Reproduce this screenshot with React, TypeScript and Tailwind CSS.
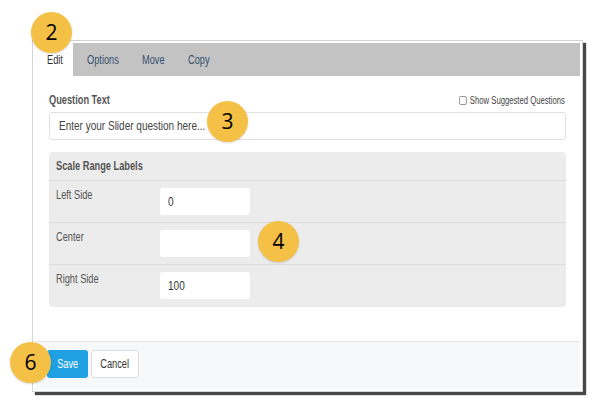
import React from "react";

const N = "inline-block whitespace-nowrap origin-left scale-x-[0.77]";
const NC = "inline-block whitespace-nowrap origin-center scale-x-[0.77]";

function Badge({ n, className }: { n: string; className: string }) {
  return (
    <div
      className={`absolute w-[41px] h-[41px] rounded-full bg-[#f5c046] flex items-center justify-center text-[21px] text-black font-['Open_Sans',sans-serif] shadow-[0_1px_2px_rgba(0,0,0,0.15)] ${className}`}
    >
      {n}
    </div>
  );
}

function Row({ label, value, last }: { label: string; value: string; last?: boolean }) {
  return (
    <div className={`flex h-[42px] pl-[7px] ${last ? "" : "border-b border-[#dcdcdc]"}`}>
      <div className="w-[104px] pt-[6px] text-[12px] text-[#555] leading-[16px]">
        <span className={N}>{label}</span>
      </div>
      <div className="pt-[7px]">
        <div className="w-[90px] h-[27px] bg-white rounded-[3px] flex items-center pl-[8px] text-[13px] text-[#333]">
          <span className={N}>{value}</span>
        </div>
      </div>
    </div>
  );
}

export default function App() {
  return (
    <div className="relative w-[600px] h-[406px] bg-white overflow-hidden font-['Liberation_Sans',Arial,sans-serif]">
      <div className="ml-[32px] mt-[40px] w-[551px] border border-[#d4d4d4] p-[2px] bg-white shadow-[3px_3px_1px_rgba(40,40,40,0.85)]">
        {/* Tabs */}
        <div className="flex h-[33px] bg-[#c3c3c3] text-[12px] text-[#34506e]">
          <div className="bg-white w-[38px] pl-[12px] flex items-center text-[#333]">
            <span className={N}>Edit</span>
          </div>
          <div className="w-[55px] pl-[14px] flex items-center">
            <span className={N}>Options</span>
          </div>
          <div className="w-[46px] pl-[14px] flex items-center">
            <span className={N}>Move</span>
          </div>
          <div className="pl-[14px] flex items-center">
            <span className={N}>Copy</span>
          </div>
        </div>
        {/* Body */}
        <div className="px-[14px] pt-[17px] pb-[34px]">
          <div className="flex justify-between items-center h-[14px]">
            <div className="text-[12px] font-bold text-[#555]">
              <span className={N}>Question Text</span>
            </div>
            <div className="flex items-center gap-[4px] text-[10px] text-[#444] pr-[2px] origin-right scale-x-[0.77]">
              <div className="w-[10px] h-[9px] border border-[#888] rounded-[2px] bg-white"></div>
              <span className="whitespace-nowrap">Show Suggested Questions</span>
            </div>
          </div>
          <div className="mt-[5px] h-[28px] border border-[#e0e0e0] rounded-[3px] flex items-center pl-[9px] text-[13px] text-[#444]">
            <span className={N}>Enter your Slider question here...</span>
          </div>
          <div className="mt-[12px] h-[155px] bg-[#ececec] rounded-[4px]">
            <div className="h-[29px] flex items-center pl-[7px] text-[12px] font-bold text-[#555] border-b border-[#dcdcdc]">
              <span className={N}>Scale Range Labels</span>
            </div>
            <Row label="Left Side" value="0" />
            <Row label="Center" value="" />
            <Row label="Right Side" value="100" last />
          </div>
        </div>
        {/* Footer */}
        <div className="h-[48px] border-t border-[#e6e6e6] bg-[#f7f8f9] flex items-start pt-[8px] pl-[12px] gap-[3px]">
          <div className="w-[41px] h-[28px] bg-[#1ea0e2] rounded-[3px] text-white text-[12px] flex items-center justify-center">
            <span className={NC}>Save</span>
          </div>
          <div className="w-[48px] h-[28px] bg-white border border-[#dcdcdc] rounded-[3px] text-[#333] text-[12px] flex items-center justify-center">
            <span className={NC}>Cancel</span>
          </div>
        </div>
      </div>
      <Badge n="2" className="left-[31px] top-[12px]" />
      <Badge n="3" className="left-[207px] top-[101px]" />
      <Badge n="4" className="left-[258px] top-[221px]" />
      <Badge n="6" className="left-[10px] top-[342px]" />
    </div>
  );
}
